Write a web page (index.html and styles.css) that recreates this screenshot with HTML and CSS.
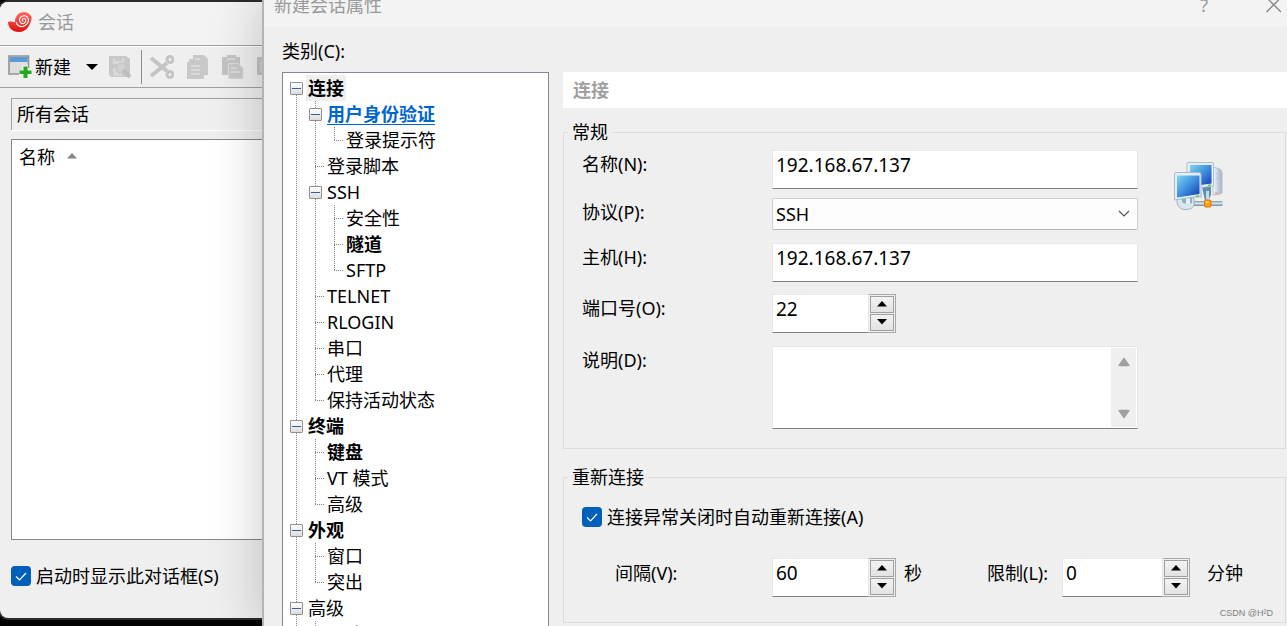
FILE: index.html
```html
<!DOCTYPE html>
<html lang="zh-CN">
<head>
<meta charset="utf-8">
<title>新建会话属性</title>
<link rel="stylesheet" href="styles.css">
</head>
<body>
<section class="sessions" aria-label="会话">
  <header class="sessions-title">
    <svg class="logo" width="24" height="21" viewBox="0 0 24 21" aria-hidden="true">
      <defs><linearGradient id="shell" x1="0" y1="0" x2="0" y2="1"><stop offset="0" stop-color="#ff6a60"/><stop offset=".55" stop-color="#ee3a34"/><stop offset="1" stop-color="#d90f12"/></linearGradient></defs>
      <path fill="url(#shell)" d="M0 10 C2 9 5 10 7 10 C7 4 11 0 16 0 C19 0 20 1 21 2 C23 3 24 5 23.500 7 C22 14 18 20 11 20 C4 20 0 15 0 10Z"/>
      <path fill="none" stroke="#fff" stroke-width="1.100" d="M8 10 C9 14 13 15.500 16 14 C21 12 21.500 7 19 4.800 C16 2.500 11.500 4.500 11.500 8 C11.500 11 14.500 12.500 16.500 11 C18.500 9.500 18 6.500 16 6.500 C14 6.500 13.500 9 15.500 9.300"/>
    </svg>
    <h1>会话</h1>
  </header>
  <div class="toolbar">
    <button class="tool new" type="button">
      <svg width="24" height="24" viewBox="0 0 24 24" aria-hidden="true"><path fill="#dedede" stroke="#929292" stroke-width="1.600" d="M1 1H20.500V19H1Z"/><path fill="#5b9bd5" d="M2 2H19.700V7H2Z"/><path fill="#efefef" d="M14 10h6v3h4v9H11v-7h3z"/><path fill="#22a922" d="M15.500 11.500h4v4h4v3.500h-4v4h-4v-4h-4v-3.500h4z"/></svg>
      <span>新建</span>
      <svg class="caret" width="12" height="6" viewBox="0 0 12 6" aria-hidden="true"><path d="M0 0H12L6 6Z"/></svg>
    </button>
    <button class="tool" type="button" aria-label="属性" disabled>
      <svg width="24" height="24" viewBox="0 0 24 24" aria-hidden="true"><path fill="#c8c8c8" d="M1 1H18L22 4V22H3L1 20Z"/><path fill="#d8d8d8" d="M5 3H16V9H5ZM5 13H14V21H5Z"/><path fill="#c8c8c8" d="M7 3h7v3H7z"/><circle cx="13" cy="13" r="5" fill="#d0d0d0" stroke="#c4c4c4"/><path stroke="#bdbdbd" stroke-width="4" d="M15 15L22 22"/></svg>
    </button>
    <span class="divider"></span>
    <button class="tool" type="button" aria-label="剪切" disabled>
      <svg width="24" height="24" viewBox="0 0 24 24" aria-hidden="true"><g fill="none" stroke="#c4c4c4" stroke-width="3"><path stroke-width="4" d="M1 3L17 16M1 21L17 8"/><circle cx="20" cy="4.500" r="3"/><circle cx="20" cy="19.500" r="3"/></g></svg>
    </button>
    <button class="tool" type="button" aria-label="复制" disabled>
      <svg width="22" height="24" viewBox="0 0 22 24" aria-hidden="true"><path fill="#c8c8c8" d="M6 0H17L21 4V20H17V24H0V7H2V4H6Z"/><path fill="none" stroke="#dfdfdf" stroke-width="1.500" d="M4 11H13M4 15H13M4 19H13M8 4H13"/></svg>
    </button>
    <button class="tool" type="button" aria-label="粘贴" disabled>
      <svg width="22" height="24" viewBox="0 0 22 24" aria-hidden="true"><path fill="#c4c4c4" d="M0 2H5V0H14V2H18V20H0Z"/><path fill="#c8c8c8" stroke="#dedede" d="M6.500 8.500H16L21 13V24H6.500Z"/><path fill="none" stroke="#dfdfdf" stroke-width="1.500" d="M9 13H15M9 17H18M5 4H13"/></svg>
    </button>
    <button class="tool" type="button" aria-label="更多" disabled>
      <svg width="22" height="24" viewBox="0 0 22 24" aria-hidden="true"><path fill="#c4c4c4" d="M0 2H22V20H0Z"/><path fill="#d0d0d0" d="M3 6h19v11H3z"/></svg>
    </button>
  </div>
  <div class="path">所有会话</div>
  <div class="list">
    <span>名称</span>
    <svg width="10" height="6" viewBox="0 0 10 6" aria-hidden="true"><path fill="#858585" d="M0 5.500L5 0L10 5.500Z"/></svg>
  </div>
  <label class="check startup"><input type="checkbox" checked><span>启动时显示此对话框(S)</span></label>
</section>

<main class="dialog">
  <header class="dialog-title">
    <h2>新建会话属性</h2>
    <button class="help" type="button">?</button>
    <button class="close" type="button" aria-label="关闭"><svg width="16" height="16" viewBox="0 0 16 16" aria-hidden="true"><path stroke="#858585" stroke-width="1.300" d="M.5 .5L15 15M15 .5L.5 15"/></svg></button>
  </header>
  <div class="dialog-body">
    <nav class="category">
      <h3 id="category-label">类别(C):</h3>
      <ul class="tree" role="tree" aria-labelledby="category-label">
        <li><i class="cell first"><button class="toggle" type="button" aria-label="折叠"></button></i><b class="current">连接</b></li>
        <li><i class="cell"></i><i class="cell"><button class="toggle" type="button" aria-label="折叠"></button></i><a href="#auth">用户身份验证</a></li>
        <li><i class="cell"></i><i class="cell"></i><i class="cell leaf end"></i><span>登录提示符</span></li>
        <li><i class="cell"></i><i class="cell leaf"></i><span>登录脚本</span></li>
        <li><i class="cell"></i><i class="cell"><button class="toggle" type="button" aria-label="折叠"></button></i><span>SSH</span></li>
        <li><i class="cell"></i><i class="cell"></i><i class="cell leaf"></i><span>安全性</span></li>
        <li><i class="cell"></i><i class="cell"></i><i class="cell leaf"></i><b>隧道</b></li>
        <li><i class="cell"></i><i class="cell"></i><i class="cell leaf end"></i><span>SFTP</span></li>
        <li><i class="cell"></i><i class="cell leaf"></i><span>TELNET</span></li>
        <li><i class="cell"></i><i class="cell leaf"></i><span>RLOGIN</span></li>
        <li><i class="cell"></i><i class="cell leaf"></i><span>串口</span></li>
        <li><i class="cell"></i><i class="cell leaf"></i><span>代理</span></li>
        <li><i class="cell"></i><i class="cell leaf end"></i><span>保持活动状态</span></li>
        <li><i class="cell"><button class="toggle" type="button" aria-label="折叠"></button></i><b>终端</b></li>
        <li><i class="cell"></i><i class="cell leaf"></i><b>键盘</b></li>
        <li><i class="cell"></i><i class="cell leaf"></i><span>VT 模式</span></li>
        <li><i class="cell"></i><i class="cell leaf end"></i><span>高级</span></li>
        <li><i class="cell"><button class="toggle" type="button" aria-label="折叠"></button></i><b>外观</b></li>
        <li><i class="cell"></i><i class="cell leaf"></i><span>窗口</span></li>
        <li><i class="cell"></i><i class="cell leaf end"></i><span>突出</span></li>
        <li><i class="cell"><button class="toggle" type="button" aria-label="折叠"></button></i><span>高级</span></li>
        <li><i class="cell"></i><i class="cell leaf"></i><span>跟踪</span></li>
      </ul>
    </nav>
    <form class="pane">
      <h3 class="banner">连接</h3>
      <fieldset class="general">
        <legend>常规</legend>
        <div class="fields">
          <label for="name">名称(N):</label>
          <input class="text" id="name" type="text" value="192.168.67.137">
          <label for="protocol">协议(P):</label>
          <select id="protocol"><option>SSH</option></select>
          <label for="host">主机(H):</label>
          <input class="text" id="host" type="text" value="192.168.67.137">
          <label for="port">端口号(O):</label>
          <div class="spin">
            <input class="text" id="port" type="text" inputmode="numeric" value="22">
            <span class="arrows"><button type="button" aria-label="增加"></button><button class="down" type="button" aria-label="减少"></button></span>
          </div>
          <label for="desc">说明(D):</label>
          <div class="memo">
            <textarea id="desc"></textarea>
            <span class="scroll" aria-hidden="true">
              <svg width="12" height="10" viewBox="0 0 12 10"><path fill="#a0a0a0" stroke="#a0a0a0" stroke-width="1.500" stroke-linejoin="round" d="M1.200 8.500L6 1.500L10.800 8.500Z"/></svg>
              <svg width="12" height="10" viewBox="0 0 12 10"><path fill="#a0a0a0" stroke="#a0a0a0" stroke-width="1.500" stroke-linejoin="round" d="M1.200 1.500L6 8.500L10.800 1.500Z"/></svg>
            </span>
          </div>
        </div>
        <svg class="computers" width="50" height="50" viewBox="0 0 50 50" aria-hidden="true">
          <defs>
            <linearGradient id="screen" x1="0" y1="0" x2="1" y2="1"><stop offset="0" stop-color="#7fd6f5"/><stop offset=".5" stop-color="#3f8edc"/><stop offset="1" stop-color="#1238b4"/></linearGradient>
            <linearGradient id="tower" x1="0" y1="0" x2="1" y2="0"><stop offset="0" stop-color="#f4f7fa"/><stop offset="1" stop-color="#9db2c6"/></linearGradient>
            <linearGradient id="cable" x1="0" y1="0" x2="0" y2="1"><stop offset="0" stop-color="#7f95a8"/><stop offset=".45" stop-color="#dce8f0"/><stop offset="1" stop-color="#718798"/></linearGradient>
          </defs>
          <path fill="url(#tower)" stroke="#b4c2cf" d="M39 5L46 7Q48 8 48 11V31Q46 33 39 33Z"/>
          <path stroke="#bac8d5" d="M42 12l4 1M42 16l4 1"/><path stroke="#f47a60" d="M41 31h3"/>
          <path fill="#5f8fae" d="M28 25H37V33L34 39H31Z"/><path fill="#c9d9e4" d="M32 29H35V38H32ZM22 33l6-4v7h-6z"/>
          <path fill="#e6eef4" stroke="#b0c0ce" d="M13 1Q13 .5 14 .5H38Q39.500 .5 39.500 2V24L13 27Z"/>
          <path fill="url(#screen)" d="M16 3H37.500V21.500L16 24.500Z"/>
          <path fill="url(#cable)" d="M20 39H48Q50 42 48 44H20Z"/>
          <path fill="#dbe7ef" stroke="#9db2c3" d="M3 38C3 44 6 47.500 11 47.500C16 47.500 20 46 20 42V36H3Z"/><path fill="#8eb0c7" d="M8 35H18V41Q13 44 8 40Z"/><path fill="#e8f1f6" d="M12 34h4v8h-4z"/>
          <path fill="#e6eef4" stroke="#a9bac9" d="M.5 12Q.5 10.500 2 10.500H25Q27 10.500 27 12V34L.5 38Z"/>
          <path fill="url(#screen)" d="M3 13.500H25.500V32L3 35.500Z"/>
          <path stroke="#65c742" stroke-width="1.500" d="M22 34.500l3-.5M34 23.500l3-.5"/>
          <rect x="30.500" y="38" width="6.500" height="7" rx="1.500" fill="#ff9f0a" stroke="#e26b00"/><path fill="#ffd65a" d="M31.500 39h3v2h-3z"/>
        </svg>
      </fieldset>
      <fieldset class="reconnect">
        <legend>重新连接</legend>
        <label class="check"><input type="checkbox" checked><span>连接异常关闭时自动重新连接(A)</span></label>
        <div class="timing">
          <label for="interval">间隔(V):</label>
          <div class="spin">
            <input class="text" id="interval" type="text" inputmode="numeric" value="60">
            <span class="arrows"><button type="button" aria-label="增加"></button><button class="down" type="button" aria-label="减少"></button></span>
          </div>
          <span>秒</span>
          <label for="limit">限制(L):</label>
          <div class="spin">
            <input class="text" id="limit" type="text" inputmode="numeric" value="0">
            <span class="arrows"><button type="button" aria-label="增加"></button><button class="down" type="button" aria-label="减少"></button></span>
          </div>
          <span>分钟</span>
        </div>
      </fieldset>
    </form>
  </div>
</main>
<small class="watermark">CSDN @H²D</small>
</body>
</html>
```

FILE: styles.css
```css
* {
  box-sizing: border-box;
}

body {
  position: relative;
  display: flex;
  height: 100vh;
  margin: 0;
  overflow: hidden;
  background: #000;
  color: #000;
  font: 18px/26px "Noto Sans", "Noto Sans CJK SC", sans-serif;
}

h1, h2, h3, ul, fieldset, legend {
  margin: 0;
  padding: 0;
  border: 0;
  font-size: inherit;
  font-weight: 400;
}

button, input, select, textarea {
  margin: 0;
  padding: 0;
  border: 0;
  border-radius: 0;
  background: none;
  color: inherit;
  font: inherit;
}

svg {
  display: block;
  flex: none;
}

/* Sessions window */

.sessions {
  display: flex;
  flex-direction: column;
  flex: none;
  width: 262px;
  margin: 2px 0 8px;
  overflow: hidden;
  border-radius: 8px 0 0 8px;
  background: #efefef;
  box-shadow: 0 0 0 2px #2b2b2b;
}

.sessions-title {
  display: flex;
  align-items: center;
  gap: 6px;
  height: 44px;
  padding: 0 8px 3px;
  border-bottom: 1px solid #a0a0a0;
  background: #f3f3f3;
  color: #999;
}

.toolbar {
  display: flex;
  align-items: center;
  height: 42px;
  padding-left: 8px;
  border-top: 1px solid #fff;
  border-bottom: 1px solid #a0a0a0;
}

.tool {
  flex: none;
  margin-right: 13px;
}

.new {
  display: flex;
  align-items: center;
  gap: 3px;
  margin-right: 10px;
}

.caret {
  margin-left: 12px;
}

.divider {
  flex: none;
  width: 1px;
  height: 34px;
  margin: 0 8px 0 -4px;
  background: #8c8c8c;
}

.path {
  margin: 10px 0 0 11px;
  padding: 2px 5px 3px;
  border: solid #a0a0a0;
  border-width: 1px 0 0 1px;
  box-shadow: 0 1px #fff;
}

.list {
  display: flex;
  flex: 1;
  align-items: flex-start;
  gap: 12px;
  margin: 9px 0 23px 11px;
  padding: 4px 7px;
  border: solid #828790;
  border-width: 1px 0 1px 1px;
  background: #fff;
}

.list svg {
  margin-top: 9px;
}

.check {
  display: flex;
  align-items: center;
  gap: 5px;
}

.check input {
  flex: none;
  width: 20px;
  height: 20px;
  border-radius: 4px;
  appearance: none;
  background: #005fb8;
}

.check input:checked {
  background: #005fb8 url("data:image/svg+xml,%3Csvg xmlns='http://www.w3.org/2000/svg' viewBox='0 0 20 20'%3E%3Cpath d='M5 10.500L8.500 14L15 7' fill='none' stroke='white' stroke-width='1.200'/%3E%3C/svg%3E");
}

.startup {
  margin: 0 0 29px 11px;
}

/* Properties dialog */

.dialog {
  display: flex;
  flex: 1;
  flex-direction: column;
  min-width: 0;
  overflow: hidden;
  border-left: 2px solid #b4b4b4;
  background: #efefef;
  box-shadow: 0 0 50px rgba(0, 0, 0, .22);
  z-index: 1;
}

.dialog-title {
  display: flex;
  flex: none;
  align-items: flex-end;
  height: 27px;
  padding: 0 5px 9px 10px;
  background: #f3f3f3;
  color: #999;
}

.dialog-title h2 {
  flex: 1;
}

.help {
  margin-right: 58px;
}

.close {
  padding-bottom: 5px;
}

.dialog-body {
  display: flex;
  flex: 1;
  min-height: 0;
  gap: 14px;
  padding-left: 18px;
}

.category {
  flex: none;
  width: 267px;
  padding-top: 11px;
}

.tree {
  margin-top: 8px;
  padding: 2px 4px;
  border: 1px solid #828790;
  background: #fff;
  list-style: none;
}

.tree li {
  display: flex;
  height: 26px;
}

.tree b, .tree a, .tree li > span {
  padding: 0 2px;
}

.tree .current {
  background: #efefef;
}

.tree a {
  color: #0066cc;
  font-weight: 700;
  text-decoration: underline;
  text-decoration-thickness: 1px;
  text-underline-offset: 3px;
}

.cell {
  display: flex;
  flex: none;
  align-items: center;
  justify-content: center;
  width: 19px;
  background: repeating-linear-gradient(#808080 0 1px, transparent 1px 2px) 9px 0 / 1px 100% no-repeat;
}

.leaf {
  background:
    repeating-linear-gradient(#808080 0 1px, transparent 1px 2px) 9px 0 / 1px 100% no-repeat,
    repeating-linear-gradient(90deg, #808080 0 1px, transparent 1px 2px) 9px 13px / 9px 1px no-repeat;
}

.leaf.end {
  background-size: 1px 13px, 9px 1px;
}

.cell.first {
  background-position: 9px 14px;
}

.toggle {
  width: 13px;
  height: 13px;
  border: 1px solid #919191;
  border-radius: 1px;
  background:
    linear-gradient(#3c5aa0, #3c5aa0) center / 9px 1px no-repeat,
    linear-gradient(#fff, #dcdcdc);
}

.pane {
  flex: 1;
  min-width: 0;
  padding-top: 45px;
}

.banner {
  padding: 5px 10px;
  background: #fff;
  color: #a0a0a0;
  font-weight: 700;
}

fieldset {
  min-width: 0;
}

.general, .reconnect {
  margin-right: 1px;
  border: 1px solid #dcdcdc;
}

legend {
  margin-left: -14px;
  padding: 0 4px;
}

.general {
  display: flex;
  gap: 36px;
  margin-top: 11px;
  padding: 5px 18px 19px;
}

.fields {
  display: grid;
  grid-template-columns: 190px 366px;
  grid-template-rows: 48px 45px 51px 52px 83px;
  align-items: start;
}

.fields label {
  line-height: 28px;
}

.text {
  width: 100%;
  height: 39px;
  padding: 0 3px 9px;
  border: 1px solid #e8e8e8;
  border-bottom-color: #808080;
  background: #fff;
  font-size: 19px;
}

select {
  width: 100%;
  height: 32px;
  padding: 0 3px;
  border: 1px solid #d0d0d0;
  border-bottom-color: #b8b8b8;
  border-radius: 2px;
  appearance: none;
  background: #fdfdfd url("data:image/svg+xml,%3Csvg xmlns='http://www.w3.org/2000/svg' viewBox='0 0 12 8'%3E%3Cpath d='M1 1L6 6L11 1' fill='none' stroke='%23555' stroke-width='1.200'/%3E%3C/svg%3E") right 7px center / 12px 8px no-repeat;
}

.spin {
  display: flex;
  width: 124px;
}

.spin .text {
  flex: 1;
  min-width: 0;
}

.arrows {
  display: flex;
  flex: none;
  flex-direction: column;
  gap: 1px;
  width: 27px;
  height: 39px;
  padding: 1px;
  border: 1px solid #a8a8ac;
  border-left: 0;
}

.arrows button {
  flex: 1;
  border: 1px solid #a0a0a0;
  background: url("data:image/svg+xml,%3Csvg xmlns='http://www.w3.org/2000/svg' viewBox='0 0 10 6'%3E%3Cpath d='M0 5.500L5 0L10 5.500Z'/%3E%3C/svg%3E") center 4px / 10px 6px no-repeat, linear-gradient(#f3f3f3, #e3e3e3);
}

.arrows .down {
  background-image: url("data:image/svg+xml,%3Csvg xmlns='http://www.w3.org/2000/svg' viewBox='0 0 10 6'%3E%3Cpath d='M0 0L5 5.500L10 0Z'/%3E%3C/svg%3E"), linear-gradient(#f3f3f3, #e3e3e3);
}

.memo {
  display: flex;
  height: 83px;
  padding: 1px;
  border: 1px solid #e8e8e8;
  border-bottom-color: #808080;
  background: #fff;
}

.memo textarea {
  flex: 1;
  resize: none;
}

.scroll {
  display: flex;
  flex-direction: column;
  align-items: center;
  justify-content: space-between;
  width: 25px;
  padding: 9px 0 8px;
  background: #efefef;
}

.computers {
  margin-top: 12px;
}

.reconnect {
  margin-top: 15px;
  padding: 14px 18px 25px;
}

.timing {
  display: flex;
  margin-top: 28px;
  padding-left: 33px;
  line-height: 30px;
}

.timing label {
  width: 157px;
}

.timing > span {
  width: 91px;
  padding-left: 8px;
}

.timing > span + label {
  width: 75px;
}

.timing .spin ~ .spin {
  width: 128px;
}

.timing > span:last-child {
  width: auto;
  padding-left: 17px;
}

.watermark {
  position: absolute;
  right: 14px;
  bottom: 6px;
  z-index: 2;
  color: #808080;
  font: 9px/14px "Liberation Sans", sans-serif;
}
```
